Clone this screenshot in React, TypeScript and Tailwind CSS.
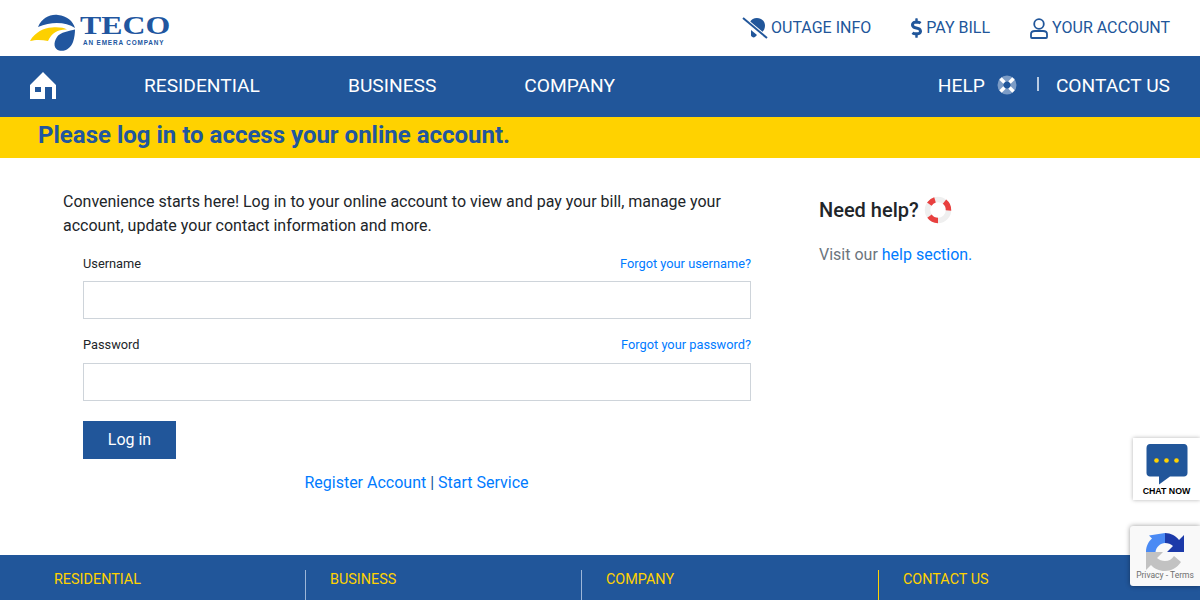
import { FaDollarSign } from 'react-icons/fa';

function Logo() {
  return (
    <div className="flex items-start">
      <svg width="48" height="38" viewBox="0 0 48 38" className="mt-[9px]">
        <path d="M8 13C12 4 20 0 28 1C37 2 43 7 45 14C36 8 22 7 8 13Z" fill="#21569f" />
        <path d="M0 27C5 18 14 14 22 13.5C28 13 34 13.5 37 15.5C29 15 22 18 18 27C12 25.5 5 25.5 0 27Z" fill="#fdd000" />
        <path d="M45 15.5C40 17 30 18 27 23C23 29 24 35 29 36.5C35 38 41 34 43 28C44.5 24 45 19 45 15.5Z" fill="#21569f" />
      </svg>
      <div className="ml-[2px] mt-[11px] flex flex-col items-start">
        <span className="origin-left scale-x-[1.3] font-['Liberation_Serif',serif] text-[24.5px] font-bold leading-[20px] text-[#21569f]">TECO</span>
        <span className="ml-[3px] mt-[3px] font-['Liberation_Sans',sans-serif] text-[6.4px] font-bold leading-[8px] tracking-[0.85px] text-[#21569f]">AN EMERA COMPANY</span>
      </div>
    </div>
  );
}

function HelpBuoy() {
  return (
    <svg width="20" height="20" viewBox="0 0 20 20" fill="none">
      <circle cx="10" cy="10" r="9.5" fill="#7c9cc6" />
      <circle cx="10" cy="10" r="3.6" fill="#21569a" />
      <g stroke="#ffffff" strokeWidth="3.4">
        <path d="M3.5 3.5L7.5 7.5" />
        <path d="M16.5 3.5L12.5 7.5" />
        <path d="M3.5 16.5L7.5 12.5" />
        <path d="M16.5 16.5L12.5 12.5" />
      </g>
    </svg>
  );
}

function RedBuoy() {
  return (
    <svg width="28" height="28" viewBox="0 0 28 28" fill="none">
      <circle cx="14" cy="14" r="10.5" stroke="#efefef" strokeWidth="5.5" />
      <g stroke="#e8403f" strokeWidth="5.5">
        <path d="M5.3 8.1A10.5 10.5 0 0 1 11 3.9" />
        <path d="M20.5 5.7A10.5 10.5 0 0 1 24.5 14.5" />
        <path d="M5.5 20.2A10.5 10.5 0 0 0 14 24.5" />
      </g>
    </svg>
  );
}

function OutageIcon() {
  return (
    <svg width="26" height="22" viewBox="0 0 26 22" fill="none">
      <path d="M8 5C10 1 15 0 19 2C23 4 24 9 22 13C21 14 20 15 19 17L9 9C8.5 8 8 7 8 5Z" fill="#21569a" />
      <path d="M9 13L15 18L13 20C11.5 21 9.5 20 9 18.5Z" fill="#21569a" />
      <path d="M1 1L25 21" stroke="#ffffff" strokeWidth="4" />
      <path d="M1 1L25 21" stroke="#21569a" strokeWidth="2" />
    </svg>
  );
}

function UserIcon() {
  return (
    <svg width="18" height="21" viewBox="0 0 18 21" fill="none" stroke="#21569a" strokeWidth="1.8">
      <circle cx="9" cy="6" r="4.8" />
      <path d="M1 19V16C1 14 3 13 5 13H13C15 13 17 14 17 16V19C17 19.5 16.5 20 16 20H2C1.5 20 1 19.5 1 19Z" />
    </svg>
  );
}

function HomeIcon() {
  return (
    <svg width="26" height="27" viewBox="0 0 26 27">
      <path
        fill="#ffffff"
        fillRule="evenodd"
        d="M13 0L26 13V27H22V15H15V27H0V13ZM5 15V20H11V15Z"
      />
    </svg>
  );
}

function Field({ label, forgot, inputTop, mb }: { label: string; forgot: string; inputTop: string; mb: string }) {
  return (
    <div className={mb}>
      <div className="flex items-baseline justify-between">
        <label className="text-[12.8px] leading-[20px] text-[#212529]">{label}</label>
        <a className="text-[12.8px] leading-[20px] text-[#007bff]">{forgot}</a>
      </div>
      <input className={`${inputTop} block h-[38px] w-full border border-[#ced4da] bg-white`} />
    </div>
  );
}

export default function App() {
  return (
    <div className="relative h-[600px] w-[1200px] overflow-hidden bg-white font-['Roboto',sans-serif]">
      <header className="flex h-14 items-center justify-between px-[30px]">
        <Logo />
        <div className="flex items-center text-[16px] text-[#21569a]">
          <a className="flex items-center gap-[3px]"><OutageIcon />OUTAGE INFO</a>
          <a className="ml-[40px] flex items-center gap-[4px]"><FaDollarSign size={20} className="w-[11px]" />PAY BILL</a>
          <a className="ml-[40px] flex items-center gap-[4px]"><UserIcon />YOUR ACCOUNT</a>
        </div>
      </header>

      <nav className="flex h-[61px] items-center justify-between bg-[#21569a] px-[30px] pb-[2px] text-[19.2px] text-white">
        <div className="flex items-center">
          <HomeIcon />
          <a className="ml-[88px] mt-[1px]">RESIDENTIAL</a>
          <a className="ml-[88px] mt-[1px]">BUSINESS</a>
          <a className="ml-[88px] mt-[1px]">COMPANY</a>
        </div>
        <div className="flex items-center">
          <a className="mt-[1px]">HELP</a>
          <span className="ml-[12px]"><HelpBuoy /></span>
          <span className="mb-[3px] ml-[20px] h-[14px] w-[2px] bg-[#b9cbe3]" />
          <a className="ml-[17px] mt-[1px]">CONTACT US</a>
        </div>
      </nav>

      <div className="flex h-[41px] items-center bg-[#ffd200] pb-[5px] pl-[38px]">
        <h1 className="text-[24px] font-bold text-[#21569f]">Please log in to access your online account.</h1>
      </div>

      <main className="flex h-[397px]">
        <section className="ml-[63px] w-[688px] pt-[32px]">
          <p className="w-[680px] text-[16px] leading-[24px] text-[#212529]">
            Convenience starts here! Log in to your online account to view and pay your bill, manage your account, update your contact information and more.
          </p>
          <form className="ml-5 mt-[16px]">
            <Field label="Username" forgot="Forgot your username?" inputTop="mt-[7px]" mb="mb-[16px]" />
            <Field label="Password" forgot="Forgot your password?" inputTop="mt-[8px]" mb="mb-[20px]" />
            <button type="button" className="h-[38px] w-[93px] bg-[#21569a] text-[16px] text-white">Log in</button>
            <p className="mt-[12px] pr-[1px] text-center text-[16px] leading-[24px] text-[#21569a]">
              <a className="text-[#007bff]">Register Account</a> | <a className="text-[#007bff]">Start Service</a>
            </p>
          </form>
        </section>
        <aside className="ml-[68px] pt-[36px]">
          <div className="flex items-center gap-[5px]">
            <h2 className="text-[20px] font-medium leading-[32px] text-[#212529]">Need help?</h2>
            <RedBuoy />
          </div>
          <p className="mt-[17px] text-[16px] leading-[24px] text-[#6c757d]">
            Visit our <a className="text-[#007bff]">help section.</a>
          </p>
        </aside>
      </main>

      <footer className="flex h-[45px] bg-[#21569a] pt-[16px] text-[14.4px] leading-[18px] text-[#ffd200]">
        <div className="-mt-[1px] h-[30px] w-[306px] border-r border-[#9db6d8] pl-[54px] pt-[1px]">RESIDENTIAL</div>
        <div className="-mt-[1px] h-[30px] w-[276px] border-r border-[#9db6d8] pl-[24px] pt-[1px]">BUSINESS</div>
        <div className="-mt-[1px] h-[30px] w-[297px] border-r border-[#ffd200] pl-[24px] pt-[1px]">COMPANY</div>
        <div className="pl-[24px]">CONTACT US</div>
      </footer>

      <div className="absolute left-[1133px] top-[438px] flex h-[62px] w-[67px] flex-col items-center bg-white shadow-[0_0_4px_rgba(0,0,0,0.3)]">
        <svg width="42" height="41" viewBox="0 0 42 41" className="mt-[6px]">
          <path d="M4 0H38C40 0 41.5 1.5 41.5 4V29C41.5 31 40 32.5 38 32.5H24L13 40.5V32.5H4C2 32.5 0.5 31 0.5 29V4C0.5 1.5 2 0 4 0Z" fill="#21569a" />
          <circle cx="10.5" cy="16.5" r="2.3" fill="#ffd200" />
          <circle cx="20.5" cy="16.5" r="2.3" fill="#ffd200" />
          <circle cx="30.5" cy="16.5" r="2.3" fill="#ffd200" />
        </svg>
        <span className="mt-[1px] font-['Liberation_Sans',sans-serif] text-[8.8px] font-bold leading-[10px] text-black">CHAT NOW</span>
      </div>

      <div className="absolute left-[1130px] top-[526px] flex h-[60px] w-[70px] flex-col items-center rounded-l-[3px] bg-[#f9f9f9] shadow-[0_0_5px_rgba(0,0,0,0.4)]">
        <svg width="38" height="38" viewBox="0 0 38 38" className="mt-[7px]">
          <path d="M0 19H17L11 25C13 27 16 28 19 28C23 28 26 26 28 23L35 29C31 35 25 38 19 38C13 38 8 35.5 5 32L0 37Z" fill="#c2c2c2" />
          <path d="M0 19C0 13 2.5 8.5 6 5.5L3 2.5L19 0V10C14.5 10 10 14 9.5 19Z" fill="#4a8af4" />
          <path d="M19 0C25 0 30 3 33 7L38 2V19H21L27 13C25 11 22 10 19 10Z" fill="#1c3aa9" />
        </svg>
        <span className="-mt-[2px] text-[8.5px] leading-[12px] text-[#6f6f6f]">Privacy - Terms</span>
      </div>
    </div>
  );
}
